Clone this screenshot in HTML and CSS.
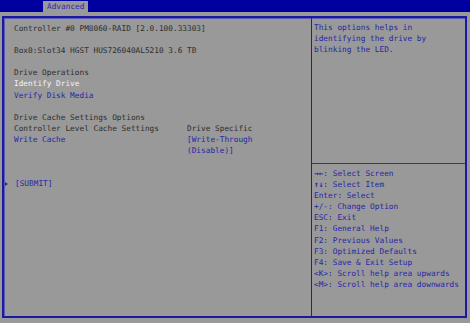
FILE: index.html
```html
<!DOCTYPE html>
<html>
<head>
<meta charset="utf-8">
<link rel="stylesheet" href="styles.css">
</head>
<body>
<div class="topbar"><div class="tab">Advanced</div></div>
<div class="frame">
  <div class="main">
    <div class="line dark">Controller #0 PM8060-RAID [2.0.100.33303]</div>
    <div class="line dark gap1">Box0:Slot34 HGST HUS726040AL5210 3.6 TB</div>
    <div class="line dark gap1">Drive Operations</div>
    <div class="line white">Identify Drive</div>
    <div class="line blue">Verify Disk Media</div>
    <div class="line dark gap1">Drive Cache Settings Options</div>
    <div class="row">
      <div class="line dark">Controller Level Cache Settings</div>
      <div class="line dark">Drive Specific</div>
    </div>
    <div class="row">
      <div class="line blue">Write Cache</div>
      <div class="blue">
        <div class="line">[Write-Through</div>
        <div class="line">(Disable)]</div>
      </div>
    </div>
    <div class="submit gap2">
      <span class="marker"><span class="tri"></span></span>
      <span class="line blue">[SUBMIT]</span>
    </div>
  </div>
  <div class="side">
    <div class="help">
      <div class="line">This options helps in</div>
      <div class="line">identifying the drive by</div>
      <div class="line">blinking the LED.</div>
    </div>
    <div class="rule"></div>
    <div class="keys">
      <div class="line"><b>→←</b>: Select Screen</div>
      <div class="line"><b>↑↓</b>: Select Item</div>
      <div class="line">Enter: Select</div>
      <div class="line">+/-: Change Option</div>
      <div class="line">ESC: Exit</div>
      <div class="line">F1: General Help</div>
      <div class="line">F2: Previous Values</div>
      <div class="line">F3: Optimized Defaults</div>
      <div class="line">F4: Save &amp; Exit Setup</div>
      <div class="line">&lt;K&gt;: Scroll help area upwards</div>
      <div class="line">&lt;M&gt;: Scroll help area downwards</div>
    </div>
  </div>
</div>
</body>
</html>
```
FILE: styles.css
```css
* { box-sizing: border-box; }
html, body {
  margin: 0;
  padding: 0;
  background: #999999;
  width: 470px;
  height: 323px;
  overflow: hidden;
  font-family: "DejaVu Sans Mono", "Liberation Mono", monospace;
  font-size: 7.77px;
  line-height: 11.1px;
}
.topbar {
  height: 12px;
  background: #0000a0;
  padding-left: 43px;
  display: flex;
  align-items: flex-end;
}
.tab {
  height: 11px;
  width: 45px;
  background: #999999;
  color: #2a2ab0;
  padding-left: 4px;
  line-height: 11px;
}
.frame {
  margin: 4px 0 0 2px;
  width: 465px;
  height: 302px;
  border: 2px solid #1a1aa0;
  box-shadow: inset 1px 1px 0 #5c5cb4;
  display: flex;
}
.main {
  width: 307px;
  padding: 5px 0 0 10px;
  display: flex;
  flex-direction: column;
}
.line { white-space: pre; height: 11.1px; }
.dark { color: #2e2e2e; }
.white { color: #f4f4f4; }
.blue { color: #2626a6; }
.gap1 { margin-top: 11.1px; }
.gap2 { margin-top: 22.2px; }
.row {
  display: grid;
  grid-template-columns: 173px 1fr;
}
.submit {
  display: flex;
  align-items: center;
  margin-left: -10px;
}
.marker {
  width: 11px;
  display: flex;
  align-items: center;
  padding-left: 1px;
}
.tri {
  width: 0;
  height: 0;
  border-left: 3px solid #2626a6;
  border-top: 2.5px solid transparent;
  border-bottom: 2.5px solid transparent;
}
.side {
  flex: 1;
  border-left: 1px solid #2020a0;
  display: flex;
  flex-direction: column;
  color: #2626a6;
  padding-top: 4px;
}
.help { padding-left: 2px; height: 141px; }
.rule {
  height: 1px;
  background: #3030a8;
  margin-bottom: 4px;
}
.keys { padding-left: 2px; }
.keys b { font-weight: bold; }
```
